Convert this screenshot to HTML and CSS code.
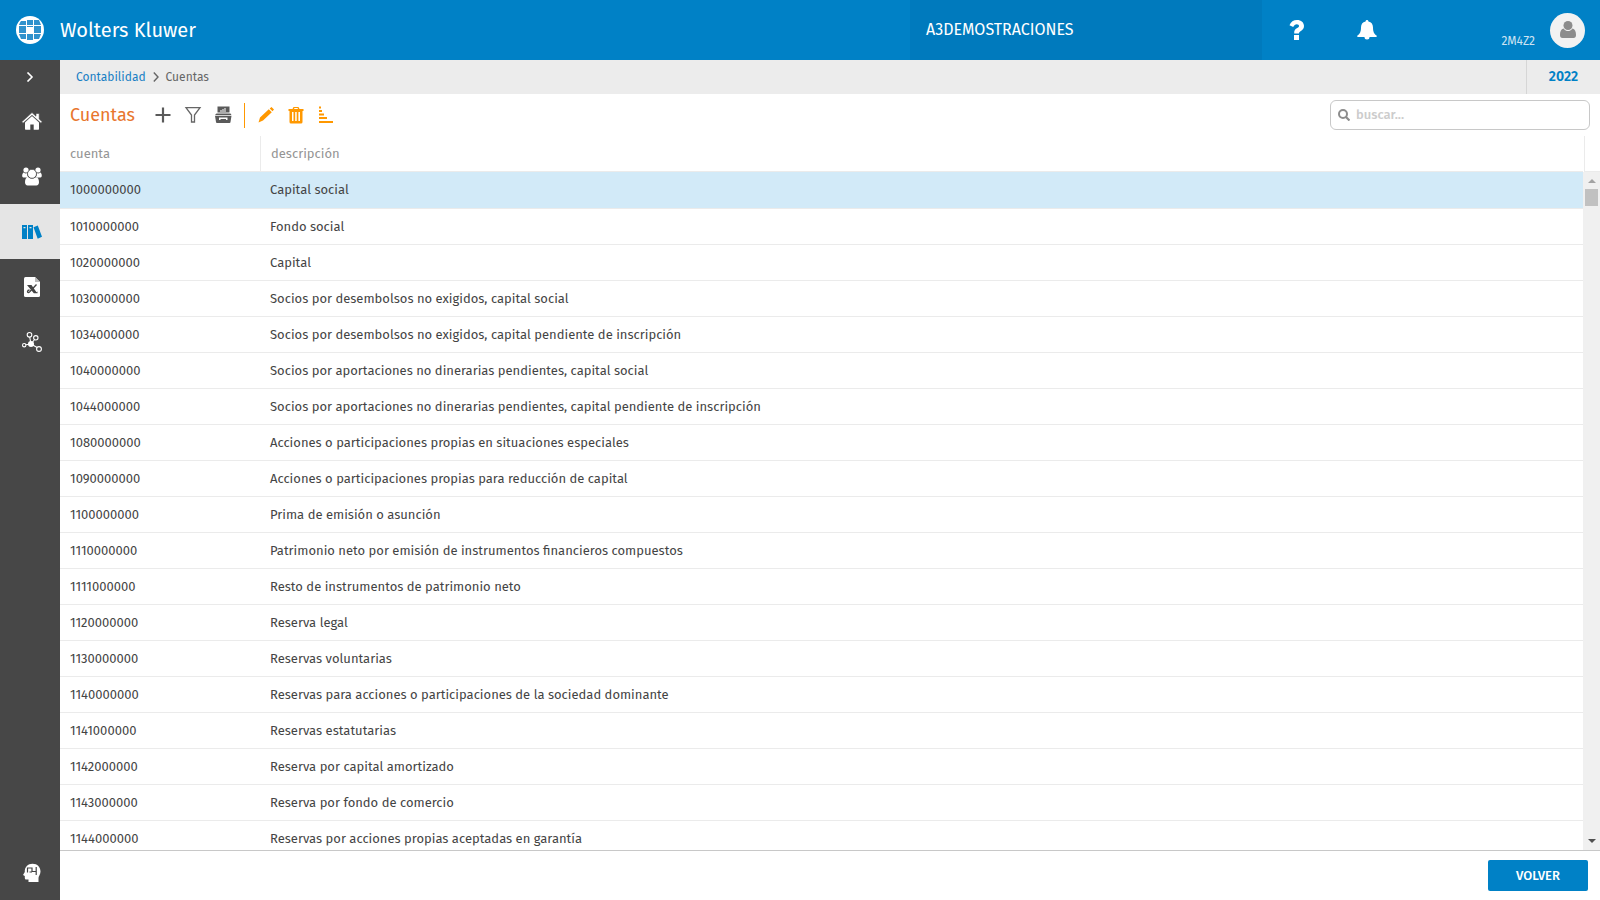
FILE: index.html
```html
<!DOCTYPE html>
<html lang="es">
<head>
<meta charset="utf-8">
<title>Cuentas</title>
<link rel="stylesheet" href="styles.css">
</head>
<body>
<header class="topbar">
  <svg class="logo" viewBox="0 0 28 28" aria-hidden="true">
    <circle cx="14" cy="14" r="14" fill="#fff"/>
    <path fill="#2f92cd" d="M5 5h5v4H3Q4 6 5 5zM11 4h6v5h-6zM18 4h5l2 5h-7zM3 10h7v7H3zM18 10h7v7h-7zM3 18h7v5H5zM11 18h6v6h-6zM18 18h7l-2 5h-5zM11 10h6v1h-6z"/>
  </svg>
  <span class="brand">Wolters Kluwer</span>
  <div class="company">A3DEMOSTRACIONES</div>
  <div class="topright">
    <button class="topbtn" aria-label="Ayuda"><svg width="16" height="20" viewBox="0 0 16 20"><path fill="#fff" d="M5 15h5v5H5zM.5 5.200C1.800 1.800 4.500 0 8 0c4.200 0 7 2.600 7 6 0 2.600-1.400 3.900-3 4.900-1.500.9-2 1.300-2 2.600H5.200c-.2-3 .8-4.200 2.600-5.300C9.200 7.400 10 7 10 6c0-1-.8-1.700-2.200-1.700-1.700 0-2.400.8-3.600 2.700z"/></svg></button>
    <button class="topbtn" aria-label="Avisos"><svg width="20" height="20" viewBox="0 0 20 20"><path fill="#fff" d="M10 0c.8 0 1.400.6 1.400 1.400C14.600 2.100 16 4.300 16 7.500c0 4.500 1.300 6.500 3.500 8 .6.500.4 1.500-.5 1.500h-6.500a2.500 2.500 0 0 1-5 0H1c-.9 0-1.100-1-.5-1.500C2.700 14 4 12 4 7.500 4 4.300 5.400 2.100 8.600 1.400 8.600.6 9.200 0 10 0z"/></svg></button>
    <span class="code">2M4Z2</span>
    <button class="avatar" aria-label="Usuario"><svg width="16" height="18" viewBox="0 0 16 18"><circle cx="8" cy="4.500" r="4.500" fill="#8c8c8c"/><path fill="#8c8c8c" d="M3.500 7.500C5 9.500 6.500 10 8 10s3-.5 4.500-2.500C15 8 16 10.500 16 14c0 2-.8 3-2.500 3h-11C.8 17 0 16 0 14c0-3.500 1-6 3.500-6.500z"/></svg></button>
  </div>
</header>
<div class="shell">
  <nav class="side" aria-label="Principal">
    <button class="expand" aria-label="Expandir"><svg width="8" height="10" viewBox="0 0 8 10"><path d="M1.500.5 6 5 1.500 9.500" fill="none" stroke="#fff" stroke-width="1.600"/></svg></button>
    <a class="item" href="#" aria-label="Inicio"><svg viewBox="0 0 20 20"><path fill="#fff" d="M10 4 17 10.500V17q0 .7-.7.700h-4.600v-5.200H8.300v5.200H3.700q-.7 0-.7-.7v-6.500z"/><path fill="#fff" stroke="#474747" stroke-width=".6" d="M10 .6 14 4.200V1.500h3.200v5.500l3 2.800-1.200 1.400L10 3.300 1 11.200-.2 9.800z"/></svg></a>
    <a class="item" href="#" aria-label="Clientes"><svg viewBox="0 0 20 20"><g fill="#fff"><circle cx="4" cy="3" r="2.600"/><circle cx="16" cy="3" r="2.600"/><path d="M1.800 5.500Q3.500 7 5.200 6.100 5 9 6.500 10.500H1.500C-.6 10.500.1 6 1.800 5.500zM18.200 5.500q-1.700 1.500-3.400.6.200 2.900-1.300 4.400h5c2.100 0 1.400-4.500-.3-5zM6 10q4 3.200 8 0c2.200.4 3 2.800 3 5.300 0 2-1 3.200-2.700 3.200H5.700C4 18.500 3 17.300 3 15.300c0-2.500.8-4.900 3-5.300z"/></g><circle cx="10" cy="6.800" r="4.500" fill="#fff" stroke="#474747" stroke-width=".8"/></svg></a>
    <a class="item active" href="#" aria-label="Contabilidad"><svg viewBox="0 0 20 20"><path fill="#0081c6" fill-rule="evenodd" d="M0 3h5v14H0zm1.500 2v1.200h2V5zM6 3h5v14H6zm1.500 2v1.200h2V5zM11.500 5.200l4.300-1.800L20 14.800l-4.300 2z"/></svg></a>
    <a class="item" href="#" aria-label="Informes"><svg viewBox="0 0 20 20"><path fill="#fff" d="M3.500 0H13l5 5v13.500q0 1.500-1.500 1.500h-13Q2 20 2 18.500v-17Q2 0 3.500 0z"/><path fill="#bbb" d="M13 0v5h5z"/><path fill="#444" d="M5 8h4.500l5 7.200 1-.7v1.700h-3.700z"/><path fill="none" stroke="#444" stroke-width="1.300" d="m14.500 7.500-6.300 6.800C7 15.700 5.500 16 5.500 14.500q.2-1.500 2-1.500"/></svg></a>
    <a class="item" href="#" aria-label="Conexiones"><svg viewBox="0 0 20 20"><g fill="none" stroke="#fff" stroke-width="1.100"><path d="M9 12 7.500 4M9 12l4-5M9 12l-7 1m7-1 7 4"/><g fill="#474747"><circle cx="7.500" cy="2.800" r="2.300"/><circle cx="13.800" cy="5.800" r="2.200"/><circle cx="2.200" cy="13.200" r="1.700"/><circle cx="17" cy="17" r="2.400"/></g></g><circle cx="9" cy="12" r="3" fill="#fff"/></svg></a>
    <a class="item last" href="#" aria-label="Asistente"><svg viewBox="0 0 20 20"><path fill="#fff" d="M6.500 19v-2.500H4q-1.200 0-1.200-1.500v-2L1 12l1.800-3C2.500 4 6 .8 10.500.8c5 0 8 3.500 8 7.700 0 3-2 4.500-2 6.500v4z"/><path fill="none" stroke="#444" stroke-width="1.200" d="M5.500 9.500V5H10v3.500h4.500M14.200 4v8M7.500 9h2.500"/></svg></a>
  </nav>
  <main class="main">
    <div class="crumbs">
      <a href="#">Contabilidad</a>
      <svg width="6" height="10" viewBox="0 0 6 10" aria-hidden="true"><path d="M.8.500 5 5 .8 9.500" fill="none" stroke="#666" stroke-width="1.400"/></svg>
      <span>Cuentas</span>
      <button class="year">2022</button>
    </div>
    <div class="tools">
      <h1>Cuentas</h1>
      <button aria-label="Nuevo"><svg viewBox="0 0 18 18"><path d="M9 1.500v15M1.500 9h15" stroke="#5a5a5a" stroke-width="2.200"/></svg></button>
      <button aria-label="Filtrar"><svg viewBox="0 0 18 18"><path d="M2 1.700h14l-5.500 7.300v7h-3V9z" fill="none" stroke="#666" stroke-width="1.300"/></svg></button>
      <button aria-label="Archivo"><svg viewBox="0 0 18 18"><path fill="#5a5a5a" fill-rule="evenodd" d="M3.500.5h12v6h-12zM6.500 4v2h1V4zm2-1v3h1V3zm2-1v4h1V2zM2.500 7.500h14l1 1.500H1zM1 9.800h16.500l-1 6.200q0 1-1 1H3q-1 0-1-1zM5 11.500v2.500h1.500v-1h5.500v1h1.500v-2.500z"/></svg></button>
      <span class="divider"></span>
      <button aria-label="Editar"><svg viewBox="0 0 18 18"><path fill="#ff9800" d="m3 11.500 8.800-8.300 3 3L6 14.500l-4.500 2zM12.700 2.500 14.500 1 17 3.500l-1.500 1.800z"/></svg></button>
      <button aria-label="Eliminar"><svg viewBox="0 0 18 18"><path fill="#ff9800" fill-rule="evenodd" d="M1.500 3h4l1-2h5l1 2h4v2h-1v11q0 1.500-1.500 1.500H4q-1.500 0-1.500-1.500V5h-1zm5.500 0h4l-.5-1h-3zM5 6v9h1.500V6zm3.200 0v9h1.500V6zm3.200 0v9H13V6z"/></svg></button>
      <button aria-label="Ordenar"><svg viewBox="0 0 18 18"><path fill="#ff9800" d="M2 .5h2v2H2zM2 4h3v2H2zM2 7.500h5v2H2zM2 11h8v2H2zM2 15h14v2H2z"/></svg></button>
      <label class="search">
        <svg width="12" height="12" viewBox="0 0 12 12" aria-hidden="true"><circle cx="5" cy="5" r="4" fill="none" stroke="#8c8c8c" stroke-width="2"/><path d="m8 8 3.500 3.500" stroke="#8c8c8c" stroke-width="2.200"/></svg>
        <input type="text" placeholder="buscar..." aria-label="buscar">
      </label>
    </div>
    <div class="grid">
      <div class="rows">
        <table>
          <thead><tr><th class="acc">cuenta</th><th>descripción</th></tr></thead>
          <tbody>
            <tr class="selected"><td>1000000000</td><td>Capital social</td></tr>
            <tr><td>1010000000</td><td>Fondo social</td></tr>
            <tr><td>1020000000</td><td>Capital</td></tr>
            <tr><td>1030000000</td><td>Socios por desembolsos no exigidos, capital social</td></tr>
            <tr><td>1034000000</td><td>Socios por desembolsos no exigidos, capital pendiente de inscripción</td></tr>
            <tr><td>1040000000</td><td>Socios por aportaciones no dinerarias pendientes, capital social</td></tr>
            <tr><td>1044000000</td><td>Socios por aportaciones no dinerarias pendientes, capital pendiente de inscripción</td></tr>
            <tr><td>1080000000</td><td>Acciones o participaciones propias en situaciones especiales</td></tr>
            <tr><td>1090000000</td><td>Acciones o participaciones propias para reducción de capital</td></tr>
            <tr><td>1100000000</td><td>Prima de emisión o asunción</td></tr>
            <tr><td>1110000000</td><td>Patrimonio neto por emisión de instrumentos financieros compuestos</td></tr>
            <tr><td>1111000000</td><td>Resto de instrumentos de patrimonio neto</td></tr>
            <tr><td>1120000000</td><td>Reserva legal</td></tr>
            <tr><td>1130000000</td><td>Reservas voluntarias</td></tr>
            <tr><td>1140000000</td><td>Reservas para acciones o participaciones de la sociedad dominante</td></tr>
            <tr><td>1141000000</td><td>Reservas estatutarias</td></tr>
            <tr><td>1142000000</td><td>Reserva por capital amortizado</td></tr>
            <tr><td>1143000000</td><td>Reserva por fondo de comercio</td></tr>
            <tr><td>1144000000</td><td>Reservas por acciones propias aceptadas en garantía</td></tr>
          </tbody>
        </table>
      </div>
      <div class="scroll" aria-hidden="true">
        <div class="corner"></div>
        <div class="track">
          <svg width="8" height="4" viewBox="0 0 8 4"><path fill="#a3a3a3" d="M4 0 8 4H0z"/></svg>
          <div class="thumb"></div>
          <svg class="down" width="8" height="4" viewBox="0 0 8 4"><path fill="#505050" d="M0 0h8L4 4z"/></svg>
        </div>
      </div>
    </div>
    <footer class="foot"><button class="back">VOLVER</button></footer>
  </main>
</div>
</body>
</html>
```
FILE: styles.css
```css
* { box-sizing: border-box; }
body {
  margin: 0;
  height: 100vh;
  display: flex;
  flex-direction: column;
  overflow: hidden;
  font: 13px/18px "Fira Sans", "Noto Sans", sans-serif;
  color: #444;
  background: #fff;
}
button { font: inherit; border: 0; padding: 0; background: none; cursor: pointer; }
a { text-decoration: none; color: #1a80c4; }
svg { display: block; flex: none; }

.topbar {
  flex: none;
  height: 60px;
  display: flex;
  align-items: center;
  background: #0081c6;
  color: #fff;
}
.logo { width: 28px; height: 28px; margin: 0 16px; }
.brand { font-size: 20px; line-height: 24px; }
.company {
  width: 22%;
  height: 100%;
  display: flex;
  align-items: center;
  margin-left: auto;
  padding: 0 16px;
  background: #007abd;
  font-size: 16px;
}
.topright { width: 338px; height: 100%; display: flex; align-items: center; }
.topbtn { width: 70px; height: 100%; display: flex; align-items: center; justify-content: center; }
.code { margin: 22px 15px 0 auto; font-size: 12px; color: #cde3f2; }
.avatar {
  width: 35px;
  height: 35px;
  margin-right: 15px;
  display: flex;
  align-items: center;
  justify-content: center;
  border-radius: 50%;
  background: #f2f2f2;
}

.shell { flex: 1; min-height: 0; display: flex; }
.side { width: 60px; flex: none; display: flex; flex-direction: column; background: #474747; }
.expand { height: 34px; display: flex; align-items: center; justify-content: center; }
.item { height: 55px; padding-left: 22px; display: flex; align-items: center; }
.item svg { width: 20px; height: 20px; overflow: visible; }
.active { background: #e5e5e5; }
.last { margin-top: auto; }

.main { flex: 1; min-width: 0; display: flex; flex-direction: column; }
.crumbs {
  flex: none;
  height: 34px;
  display: flex;
  align-items: center;
  gap: 7px;
  padding-left: 16px;
  background: #ececec;
  font-size: 12px;
  color: #666;
}
.year {
  width: 74px;
  height: 100%;
  margin-left: auto;
  border-left: 1px solid #d6d6d6;
  font-size: 14px;
  font-weight: 600;
  color: #0081c6;
}
.tools { flex: none; height: 42px; display: flex; align-items: center; gap: 12px; padding: 0 10px; }
.tools h1 { margin: 0 7px 0 0; font-size: 18px; line-height: 24px; font-weight: 400; color: #e8762d; }
.tools button svg { width: 18px; height: 18px; }
.divider { width: 1px; height: 25px; background: #ff9800; }
.search {
  width: 260px;
  height: 30px;
  margin-left: auto;
  display: flex;
  align-items: center;
  gap: 6px;
  padding: 0 7px;
  border: 1px solid #c8c8c8;
  border-radius: 6px;
}
.search input { flex: 1; min-width: 0; border: 0; padding: 0; outline: 0; font: inherit; font-weight: 500; background: none; }
.search input::placeholder { color: #ccc; opacity: 1; }

.grid { flex: 1; min-height: 0; display: flex; }
.rows { flex: 1; min-width: 0; overflow: hidden; }
table { width: 100%; border-collapse: separate; border-spacing: 0; table-layout: fixed; }
th { height: 36px; padding: 0 10px; text-align: left; font-weight: 400; color: #949494; border-bottom: 1px solid #ebebeb; }
.acc { width: 201px; border-right: 1px solid #ebebeb; }
td { height: 36px; padding: 0 10px; border-bottom: 1px solid #ebebeb; }
td + td { padding-left: 9px; }
.selected td { height: 37px; background: #d2eaf8; }
.scroll { width: 17px; flex: none; display: flex; flex-direction: column; }
.corner { height: 36px; margin-left: 1px; border-left: 1px solid #ebebeb; border-bottom: 1px solid #ebebeb; }
.track { flex: 1; display: flex; flex-direction: column; align-items: center; padding: 7px 0; background: #f0f0f0; }
.thumb { width: 13px; height: 17px; margin-top: 6px; background: #c1c1c1; }
.down { margin-top: auto; }

.foot {
  flex: none;
  height: 50px;
  display: flex;
  align-items: center;
  justify-content: flex-end;
  padding: 0 12px;
  border-top: 1px solid #c8c8c8;
}
.back { width: 100px; height: 31px; border-radius: 2px; background: #0081c6; color: #fff; font-weight: 500; }
```
